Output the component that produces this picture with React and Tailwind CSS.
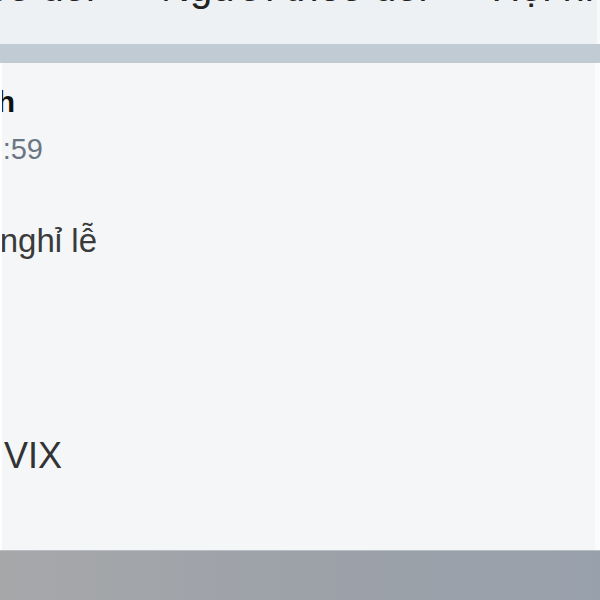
export default function App() {
  return (
    <div
      className="w-[600px] h-[600px] overflow-hidden flex flex-col bg-[#eef1f4]"
      style={{ fontFamily: '"Liberation Sans", Arial, sans-serif' }}
    >
      <div className="h-[44px] shrink-0 bg-[#eef1f4] overflow-hidden border-r-[3px] border-[#f7f9fb]">
        <div className="flex items-start whitespace-nowrap text-[40px] leading-none text-[#222] mt-[-33px]">
          <div className="w-[95px] shrink-0 flex justify-end">
            <span>Đang theo dõi</span>
          </div>
          <span className="ml-[66px] shrink-0">Người theo dõi</span>
          <span className="ml-[64px] shrink-0">Hội nhóm</span>
        </div>
      </div>
      <div className="h-[19px] shrink-0 bg-[#c1cbd4]" />
      <div className="flex-1 bg-[#f5f6f8] border-l-[2px] border-white border-r-[5px] border-r-[#fbfcfd] overflow-hidden flex flex-col whitespace-nowrap">
        <div className="mt-[24px] w-[13px] flex justify-end text-[30px] leading-none font-bold text-[#111]">
          <span>Nguyễn Minh</span>
        </div>
        <div className="mt-[18px] w-[41px] flex justify-end text-[29px] leading-none text-[#6b7683]">
          <span>20/04/2024 10:59</span>
        </div>
        <div className="mt-[60px] w-[95px] flex justify-end text-[33px] leading-none text-[#3a3a3a]">
          <span>Thông báo lịch nghỉ lễ</span>
        </div>
        <div className="mt-[181px] w-[60px] flex justify-end text-[36px] leading-none text-[#333]">
          <span>Mã chứng khoán: VIX</span>
        </div>
      </div>
      <div className="h-[50px] shrink-0 border-t border-[#b9bec4] bg-gradient-to-r from-[#a6a7a9] via-[#9da2a9] to-[#98a0ab]" />
    </div>
  );
}
